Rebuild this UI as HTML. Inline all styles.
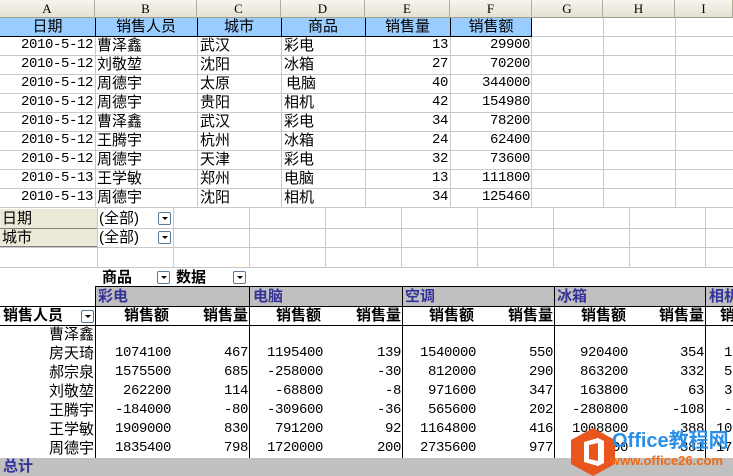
<!DOCTYPE html>
<html><head><meta charset="utf-8">
<style>
*{margin:0;padding:0;box-sizing:border-box}
body{width:733px;height:476px;overflow:hidden;background:#fff;position:relative;font-family:"Liberation Mono","Noto Sans CJK SC",monospace;font-size:14px;letter-spacing:-0.4px;color:#000}
.a{position:absolute;white-space:nowrap;line-height:19px;height:19px}
.c{font-family:"Liberation Sans","Noto Sans CJK SC",sans-serif;font-size:15px;letter-spacing:0}
.b{font-weight:bold}
.r{text-align:right}
.ctr{text-align:center}
.vl{position:absolute;width:1px;background:#c8c8c8}
.hl{position:absolute;height:1px;background:#c8c8c8}
.kv{position:absolute;width:1px;background:#000}
.kh{position:absolute;height:1px;background:#000}
.dd{position:absolute;width:13px;height:13px;border:1px solid #5a7a9a;border-radius:2px;background:#fff}
.dd:after{content:"";position:absolute;left:3px;top:4px;border-left:3px solid transparent;border-right:3px solid transparent;border-top:3px solid #000}
.colh{position:absolute;top:0;height:18px;line-height:18px;text-align:center;font-family:"Liberation Serif",serif;font-size:13px;letter-spacing:0;background:linear-gradient(#f6f5ee,#e4e1d2);border-right:1px solid #b0ad9c;border-bottom:1px solid #a09d8c}
.gray{position:absolute;background:#c0c0c0}
.blu{color:#333399;font-weight:bold}
</style></head><body>

<div class="colh" style="left:0;width:95px">A</div>
<div class="colh" style="left:95px;width:102px">B</div>
<div class="colh" style="left:197px;width:84px">C</div>
<div class="colh" style="left:281px;width:84px">D</div>
<div class="colh" style="left:365px;width:85px">E</div>
<div class="colh" style="left:450px;width:82px">F</div>
<div class="colh" style="left:532px;width:71px">G</div>
<div class="colh" style="left:603px;width:72px">H</div>
<div class="colh" style="left:675px;width:58px">I</div>

<div style="position:absolute;left:0;top:18px;width:532px;height:19px;background:#99ccff"></div>
<div class="vl" style="left:95px;top:18px;height:190px"></div>
<div class="vl" style="left:197px;top:18px;height:190px"></div>
<div class="vl" style="left:281px;top:18px;height:190px"></div>
<div class="vl" style="left:365px;top:18px;height:190px"></div>
<div class="vl" style="left:450px;top:18px;height:190px"></div>
<div class="vl" style="left:603px;top:18px;height:190px"></div>
<div class="vl" style="left:675px;top:18px;height:190px"></div>
<div class="kv" style="left:95px;top:18px;height:19px"></div>
<div class="kv" style="left:197px;top:18px;height:19px"></div>
<div class="kv" style="left:281px;top:18px;height:19px"></div>
<div class="kv" style="left:365px;top:18px;height:19px"></div>
<div class="kv" style="left:450px;top:18px;height:19px"></div>
<div class="kv" style="left:531px;top:18px;height:19px"></div>
<div class="kh" style="left:0;top:36px;width:532px"></div>
<div class="vl" style="left:531px;top:37px;height:171px"></div>
<div class="hl" style="left:532px;top:36px;width:201px"></div>
<div class="hl" style="left:0;top:55px;width:733px"></div>
<div class="hl" style="left:0;top:74px;width:733px"></div>
<div class="hl" style="left:0;top:93px;width:733px"></div>
<div class="hl" style="left:0;top:112px;width:733px"></div>
<div class="hl" style="left:0;top:131px;width:733px"></div>
<div class="hl" style="left:0;top:150px;width:733px"></div>
<div class="hl" style="left:0;top:169px;width:733px"></div>
<div class="hl" style="left:0;top:188px;width:733px"></div>
<div class="hl" style="left:0;top:207px;width:733px"></div>

<div class="a c ctr" style="left:0;top:17px;width:95px">日期</div>
<div class="a c ctr" style="left:95px;top:17px;width:102px">销售人员</div>
<div class="a c ctr" style="left:197px;top:17px;width:84px">城市</div>
<div class="a c ctr" style="left:281px;top:17px;width:84px">商品</div>
<div class="a c ctr" style="left:365px;top:17px;width:85px">销售量</div>
<div class="a c ctr" style="left:450px;top:17px;width:82px">销售额</div>

<div style="position:absolute;left:0;top:36px">
<div class="a r" style="left:0;top:0;width:93px">2010-5-12</div><div class="a c" style="left:97px;top:0">曹泽鑫</div><div class="a c" style="left:200px;top:0">武汉</div><div class="a c" style="left:284px;top:0">彩电</div><div class="a r" style="left:365px;top:0;width:83px">13</div><div class="a r" style="left:450px;top:0;width:80px">29900</div>
<div class="a r" style="left:0;top:19px;width:93px">2010-5-12</div><div class="a c" style="left:97px;top:19px">刘敬堃</div><div class="a c" style="left:200px;top:19px">沈阳</div><div class="a c" style="left:284px;top:19px">冰箱</div><div class="a r" style="left:365px;top:19px;width:83px">27</div><div class="a r" style="left:450px;top:19px;width:80px">70200</div>
<div class="a r" style="left:0;top:38px;width:93px">2010-5-12</div><div class="a c" style="left:97px;top:38px">周德宇</div><div class="a c" style="left:200px;top:38px">太原</div><div class="a c" style="left:286px;top:38px">电脑</div><div class="a r" style="left:365px;top:38px;width:83px">40</div><div class="a r" style="left:450px;top:38px;width:80px">344000</div>
<div class="a r" style="left:0;top:57px;width:93px">2010-5-12</div><div class="a c" style="left:97px;top:57px">周德宇</div><div class="a c" style="left:200px;top:57px">贵阳</div><div class="a c" style="left:284px;top:57px">相机</div><div class="a r" style="left:365px;top:57px;width:83px">42</div><div class="a r" style="left:450px;top:57px;width:80px">154980</div>
<div class="a r" style="left:0;top:76px;width:93px">2010-5-12</div><div class="a c" style="left:97px;top:76px">曹泽鑫</div><div class="a c" style="left:200px;top:76px">武汉</div><div class="a c" style="left:284px;top:76px">彩电</div><div class="a r" style="left:365px;top:76px;width:83px">34</div><div class="a r" style="left:450px;top:76px;width:80px">78200</div>
<div class="a r" style="left:0;top:95px;width:93px">2010-5-12</div><div class="a c" style="left:97px;top:95px">王腾宇</div><div class="a c" style="left:200px;top:95px">杭州</div><div class="a c" style="left:284px;top:95px">冰箱</div><div class="a r" style="left:365px;top:95px;width:83px">24</div><div class="a r" style="left:450px;top:95px;width:80px">62400</div>
<div class="a r" style="left:0;top:114px;width:93px">2010-5-12</div><div class="a c" style="left:97px;top:114px">周德宇</div><div class="a c" style="left:200px;top:114px">天津</div><div class="a c" style="left:284px;top:114px">彩电</div><div class="a r" style="left:365px;top:114px;width:83px">32</div><div class="a r" style="left:450px;top:114px;width:80px">73600</div>
<div class="a r" style="left:0;top:133px;width:93px">2010-5-13</div><div class="a c" style="left:97px;top:133px">王学敏</div><div class="a c" style="left:200px;top:133px">郑州</div><div class="a c" style="left:284px;top:133px">电脑</div><div class="a r" style="left:365px;top:133px;width:83px">13</div><div class="a r" style="left:450px;top:133px;width:80px">111800</div>
<div class="a r" style="left:0;top:152px;width:93px">2010-5-13</div><div class="a c" style="left:97px;top:152px">周德宇</div><div class="a c" style="left:200px;top:152px">沈阳</div><div class="a c" style="left:284px;top:152px">相机</div><div class="a r" style="left:365px;top:152px;width:83px">34</div><div class="a r" style="left:450px;top:152px;width:80px">125460</div>
</div>

<div class="vl" style="left:97px;top:208px;height:60px"></div>
<div class="vl" style="left:173px;top:208px;height:60px"></div>
<div class="vl" style="left:249px;top:208px;height:60px"></div>
<div class="vl" style="left:325px;top:208px;height:60px"></div>
<div class="vl" style="left:401px;top:208px;height:60px"></div>
<div class="vl" style="left:477px;top:208px;height:60px"></div>
<div class="vl" style="left:553px;top:208px;height:60px"></div>
<div class="vl" style="left:629px;top:208px;height:60px"></div>
<div class="vl" style="left:705px;top:208px;height:60px"></div>
<div class="hl" style="left:0;top:228px;width:733px"></div>
<div class="hl" style="left:0;top:247px;width:733px"></div>
<div class="hl" style="left:0;top:267px;width:733px"></div>
<div style="position:absolute;left:0;top:209px;width:97px;height:38px;background:#ece9d8;border-bottom:1px solid #808080"></div>
<div class="hl" style="left:0;top:228px;width:97px;background:#808080"></div>
<div class="a c" style="left:2px;top:209px">日期</div>
<div class="a c" style="left:2px;top:228px">城市</div>
<div class="a c" style="left:99px;top:209px">(全部)</div>
<div class="a c" style="left:99px;top:228px">(全部)</div>
<div class="dd" style="left:158px;top:212px"></div>
<div class="dd" style="left:158px;top:231px"></div>

<div class="a c b" style="left:102px;top:268px">商品</div>
<div class="dd" style="left:157px;top:271px"></div>
<div class="a c b" style="left:176px;top:268px">数据</div>
<div class="dd" style="left:233px;top:271px"></div>

<div class="gray" style="left:95px;top:287px;width:638px;height:19px"></div>
<div class="kh" style="left:95px;top:286px;width:638px"></div>
<div class="kh" style="left:0;top:306px;width:733px"></div>
<div class="kh" style="left:0;top:325px;width:733px"></div>
<div class="kv" style="left:95px;top:286px;height:172px"></div>
<div class="kv" style="left:249px;top:286px;height:172px"></div>
<div class="kv" style="left:402px;top:286px;height:172px"></div>
<div class="kv" style="left:554px;top:286px;height:172px"></div>
<div class="kv" style="left:705px;top:286px;height:172px"></div>

<div class="a c blu" style="left:98px;top:287px">彩电</div>
<div class="a c blu" style="left:253px;top:287px">电脑</div>
<div class="a c blu" style="left:405px;top:287px">空调</div>
<div class="a c blu" style="left:557px;top:287px">冰箱</div>
<div class="a c blu" style="left:709px;top:287px">相机</div>

<div class="a c b" style="left:3px;top:306px">销售人员</div>
<div class="dd" style="left:81px;top:310px"></div>
<div class="a c b r" style="left:95px;top:306px;width:74px">销售额</div>
<div class="a c b r" style="left:172px;top:306px;width:76px">销售量</div>
<div class="a c b r" style="left:249px;top:306px;width:72px">销售额</div>
<div class="a c b r" style="left:326px;top:306px;width:75px">销售量</div>
<div class="a c b r" style="left:402px;top:306px;width:72px">销售额</div>
<div class="a c b r" style="left:478px;top:306px;width:75px">销售量</div>
<div class="a c b r" style="left:554px;top:306px;width:72px">销售额</div>
<div class="a c b r" style="left:630px;top:306px;width:74px">销售量</div>
<div class="a c b" style="left:720px;top:306px">销</div>

<div style="position:absolute;left:0;top:325px">
<div class="a c r" style="left:0;top:0;width:94px">曹泽鑫</div>
<div class="a c r" style="left:0;top:19px;width:94px">房天琦</div>
<div class="a c r" style="left:0;top:38px;width:94px">郝宗泉</div>
<div class="a c r" style="left:0;top:57px;width:94px">刘敬堃</div>
<div class="a c r" style="left:0;top:76px;width:94px">王腾宇</div>
<div class="a c r" style="left:0;top:95px;width:94px">王学敏</div>
<div class="a c r" style="left:0;top:114px;width:94px">周德宇</div>

<div class="a r" style="left:95px;top:19px;width:76px">1074100</div><div class="a r" style="left:172px;top:19px;width:76px">467</div><div class="a r" style="left:249px;top:19px;width:74px">1195400</div><div class="a r" style="left:326px;top:19px;width:75px">139</div><div class="a r" style="left:402px;top:19px;width:74px">1540000</div><div class="a r" style="left:478px;top:19px;width:75px">550</div><div class="a r" style="left:554px;top:19px;width:74px">920400</div><div class="a r" style="left:630px;top:19px;width:74px">354</div>
<div class="a r" style="left:95px;top:38px;width:76px">1575500</div><div class="a r" style="left:172px;top:38px;width:76px">685</div><div class="a r" style="left:249px;top:38px;width:74px">-258000</div><div class="a r" style="left:326px;top:38px;width:75px">-30</div><div class="a r" style="left:402px;top:38px;width:74px">812000</div><div class="a r" style="left:478px;top:38px;width:75px">290</div><div class="a r" style="left:554px;top:38px;width:74px">863200</div><div class="a r" style="left:630px;top:38px;width:74px">332</div>
<div class="a r" style="left:95px;top:57px;width:76px">262200</div><div class="a r" style="left:172px;top:57px;width:76px">114</div><div class="a r" style="left:249px;top:57px;width:74px">-68800</div><div class="a r" style="left:326px;top:57px;width:75px">-8</div><div class="a r" style="left:402px;top:57px;width:74px">971600</div><div class="a r" style="left:478px;top:57px;width:75px">347</div><div class="a r" style="left:554px;top:57px;width:74px">163800</div><div class="a r" style="left:630px;top:57px;width:74px">63</div>
<div class="a r" style="left:95px;top:76px;width:76px">-184000</div><div class="a r" style="left:172px;top:76px;width:76px">-80</div><div class="a r" style="left:249px;top:76px;width:74px">-309600</div><div class="a r" style="left:326px;top:76px;width:75px">-36</div><div class="a r" style="left:402px;top:76px;width:74px">565600</div><div class="a r" style="left:478px;top:76px;width:75px">202</div><div class="a r" style="left:554px;top:76px;width:74px">-280800</div><div class="a r" style="left:630px;top:76px;width:74px">-108</div>
<div class="a r" style="left:95px;top:95px;width:76px">1909000</div><div class="a r" style="left:172px;top:95px;width:76px">830</div><div class="a r" style="left:249px;top:95px;width:74px">791200</div><div class="a r" style="left:326px;top:95px;width:75px">92</div><div class="a r" style="left:402px;top:95px;width:74px">1164800</div><div class="a r" style="left:478px;top:95px;width:75px">416</div><div class="a r" style="left:554px;top:95px;width:74px">1008800</div><div class="a r" style="left:630px;top:95px;width:74px">388</div>
<div class="a r" style="left:95px;top:114px;width:76px">1835400</div><div class="a r" style="left:172px;top:114px;width:76px">798</div><div class="a r" style="left:249px;top:114px;width:74px">1720000</div><div class="a r" style="left:326px;top:114px;width:75px">200</div><div class="a r" style="left:402px;top:114px;width:74px">2735600</div><div class="a r" style="left:478px;top:114px;width:75px">977</div><div class="a r" style="left:554px;top:114px;width:74px">1048600</div><div class="a r" style="left:630px;top:114px;width:74px">381</div>
<div class="a" style="left:724px;top:19px">1</div><div class="a" style="left:724px;top:38px">5</div><div class="a" style="left:724px;top:57px">3</div><div class="a" style="left:724px;top:76px">-</div><div class="a" style="left:716px;top:95px">10</div><div class="a" style="left:716px;top:114px">17</div>
</div>

<div class="gray" style="left:0;top:458px;width:733px;height:18px"></div>
<div class="a c blu" style="left:3px;top:457px">总计</div>

<svg style="position:absolute;left:570px;top:428px" width="46" height="48" viewBox="0 0 46 48">
<polygon points="23,0 45,12 45,36 23,48 1,36 1,12" fill="#e8561d"/>
<path d="M14 14 L28 10 L34 13 L34 35 L28 38 L14 34 Z M19 17 L19 31 L28 33 L28 15 Z" fill="#fff" fill-rule="evenodd"/>
</svg>
<div style="position:absolute;left:612px;top:429px;font-family:'Liberation Sans','Noto Sans CJK SC',sans-serif;font-weight:bold;font-size:20px;letter-spacing:0;color:#2b8fe8;line-height:24px;white-space:nowrap">Office教程网</div>
<div style="position:absolute;left:610px;top:453px;font-family:'Liberation Sans',sans-serif;font-weight:bold;font-size:13px;letter-spacing:0;color:#f06a14;line-height:16px;white-space:nowrap">www.office26.com</div>
</body></html>
